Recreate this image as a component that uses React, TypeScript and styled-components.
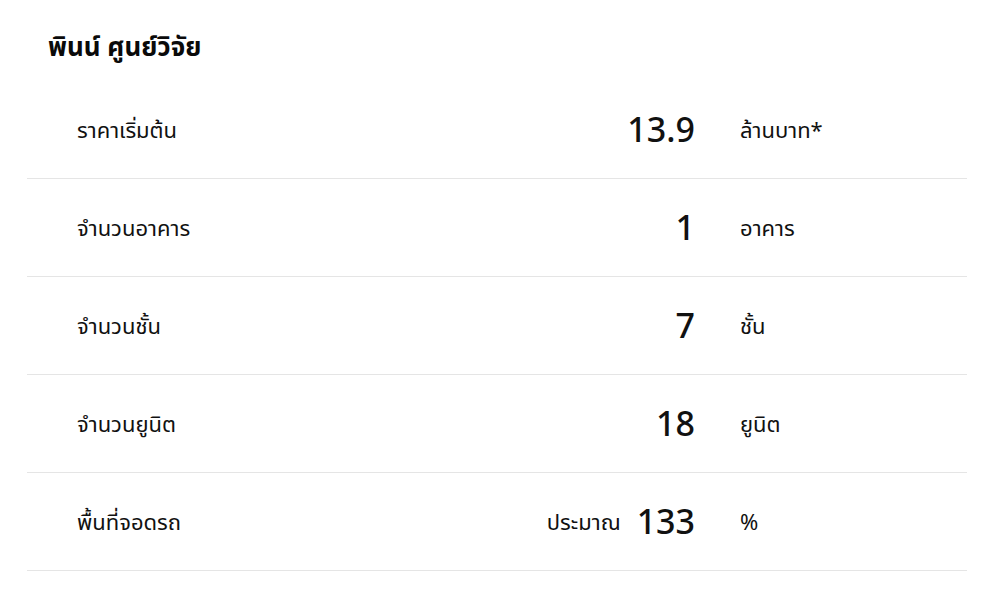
import styled, { createGlobalStyle } from 'styled-components'

const GlobalStyle = createGlobalStyle`
	body {
		margin: 0;
		background: #ffffff;
		color: #111111;
		font-family: 'Noto Sans Thai', 'Inter', 'Noto Sans', 'DejaVu Sans', sans-serif;
	}
`

const Page = styled.div`
	padding: 0 33px 0 27px;
`

const Title = styled.h2`
	margin: 0;
	padding: 31px 0 0 21px;
	height: 81px;
	box-sizing: border-box;
	font-size: 26px;
	line-height: 34px;
	font-weight: 700;
	color: #0a0a0a;
`

const List = styled.div`
	display: flex;
	flex-direction: column;
`

const Row = styled.div`
	display: grid;
	grid-template-columns: 1fr 227px;
	column-gap: 45px;
	align-items: center;
	box-sizing: border-box;
	height: 98px;
	padding: 4px 0 0 50px;
	border-bottom: 1px solid #e5e5e5;
`

const LeftCell = styled.div`
	display: flex;
	align-items: center;
	justify-content: space-between;
`

const Label = styled.span`
	font-size: 22px;
	color: #111111;
`

const ValueGroup = styled.div`
	display: flex;
	align-items: center;
	gap: 16px;
`

const Prefix = styled.span`
	font-size: 22px;
	color: #111111;
`

const Value = styled.span`
	font-size: 34px;
	font-weight: 500;
	color: #111111;
`

const Unit = styled.span`
	font-size: 22px;
	color: #111111;
`

const rows = [
	{ label: 'ราคาเริ่มต้น', value: '13.9', unit: 'ล้านบาท*' },
	{ label: 'จำนวนอาคาร', value: '1', unit: 'อาคาร' },
	{ label: 'จำนวนชั้น', value: '7', unit: 'ชั้น' },
	{ label: 'จำนวนยูนิต', value: '18', unit: 'ยูนิต' },
	{ label: 'พื้นที่จอดรถ', value: '133', unit: '%', prefix: 'ประมาณ' },
]

export default function App() {
	return (
		<>
			<GlobalStyle />
			<Page>
				<Title>พินน์ ศูนย์วิจัย</Title>
				<List>
					{rows.map((r) => (
						<Row key={r.label}>
							<LeftCell>
								<Label>{r.label}</Label>
								<ValueGroup>
									{r.prefix && <Prefix>{r.prefix}</Prefix>}
									<Value>{r.value}</Value>
								</ValueGroup>
							</LeftCell>
							<Unit>{r.unit}</Unit>
						</Row>
					))}
				</List>
			</Page>
		</>
	)
}
